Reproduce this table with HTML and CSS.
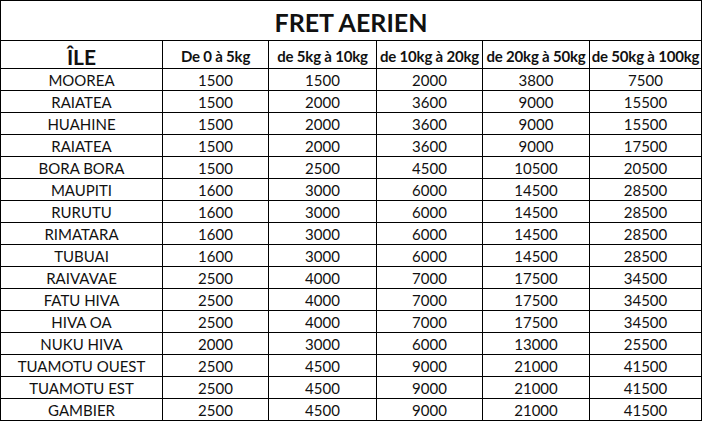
FILE: index.html
```html
<!DOCTYPE html>
<html lang="fr">
<head>
<meta charset="utf-8">
<title>Fret aérien</title>
<link rel="stylesheet" href="styles.css">
</head>
<body>
<div class="sheet">
  <div class="cell title">FRET AERIEN</div>
  <div class="cell head head-ile">ÎLE</div>
  <div class="cell head">De 0 à 5kg</div>
  <div class="cell head">de 5kg à 10kg</div>
  <div class="cell head">de 10kg à 20kg</div>
  <div class="cell head">de 20kg à 50kg</div>
  <div class="cell head">de 50kg à 100kg</div>

  <div class="cell">MOOREA</div><div class="cell">1500</div><div class="cell">1500</div><div class="cell">2000</div><div class="cell">3800</div><div class="cell">7500</div>
  <div class="cell">RAIATEA</div><div class="cell">1500</div><div class="cell">2000</div><div class="cell">3600</div><div class="cell">9000</div><div class="cell">15500</div>
  <div class="cell">HUAHINE</div><div class="cell">1500</div><div class="cell">2000</div><div class="cell">3600</div><div class="cell">9000</div><div class="cell">15500</div>
  <div class="cell">RAIATEA</div><div class="cell">1500</div><div class="cell">2000</div><div class="cell">3600</div><div class="cell">9000</div><div class="cell">17500</div>
  <div class="cell">BORA BORA</div><div class="cell">1500</div><div class="cell">2500</div><div class="cell">4500</div><div class="cell">10500</div><div class="cell">20500</div>
  <div class="cell">MAUPITI</div><div class="cell">1600</div><div class="cell">3000</div><div class="cell">6000</div><div class="cell">14500</div><div class="cell">28500</div>
  <div class="cell">RURUTU</div><div class="cell">1600</div><div class="cell">3000</div><div class="cell">6000</div><div class="cell">14500</div><div class="cell">28500</div>
  <div class="cell">RIMATARA</div><div class="cell">1600</div><div class="cell">3000</div><div class="cell">6000</div><div class="cell">14500</div><div class="cell">28500</div>
  <div class="cell">TUBUAI</div><div class="cell">1600</div><div class="cell">3000</div><div class="cell">6000</div><div class="cell">14500</div><div class="cell">28500</div>
  <div class="cell">RAIVAVAE</div><div class="cell">2500</div><div class="cell">4000</div><div class="cell">7000</div><div class="cell">17500</div><div class="cell">34500</div>
  <div class="cell">FATU HIVA</div><div class="cell">2500</div><div class="cell">4000</div><div class="cell">7000</div><div class="cell">17500</div><div class="cell">34500</div>
  <div class="cell">HIVA OA</div><div class="cell">2500</div><div class="cell">4000</div><div class="cell">7000</div><div class="cell">17500</div><div class="cell">34500</div>
  <div class="cell">NUKU HIVA</div><div class="cell">2000</div><div class="cell">3000</div><div class="cell">6000</div><div class="cell">13000</div><div class="cell">25500</div>
  <div class="cell">TUAMOTU OUEST</div><div class="cell">2500</div><div class="cell">4500</div><div class="cell">9000</div><div class="cell">21000</div><div class="cell">41500</div>
  <div class="cell">TUAMOTU EST</div><div class="cell">2500</div><div class="cell">4500</div><div class="cell">9000</div><div class="cell">21000</div><div class="cell">41500</div>
  <div class="cell">GAMBIER</div><div class="cell">2500</div><div class="cell">4500</div><div class="cell">9000</div><div class="cell">21000</div><div class="cell">41500</div>
</div>
</body>
</html>
```

FILE: styles.css
```css
html, body {
  margin: 0;
  padding: 0;
  background: #ffffff;
}

body {
  font-family: Lato, "Open Sans", "Liberation Sans", sans-serif;
  color: #111111;
}

.sheet {
  display: grid;
  grid-template-columns: 161px 105px 107px 105px 106px 111px;
  grid-template-rows: 39px 27px repeat(16, 21px);
  gap: 1px;
  padding: 1px;
  width: 702px;
  box-sizing: border-box;
  background: #000000;
}

.cell {
  background: #ffffff;
  display: flex;
  align-items: center;
  justify-content: center;
  font-size: 15px;
  white-space: nowrap;
  overflow: hidden;
}

.title {
  grid-column: 1 / -1;
  font-size: 25px;
  font-weight: 700;
  padding-top: 3px;
  box-sizing: border-box;
}

.head {
  font-weight: 700;
  font-size: 15px;
  letter-spacing: -0.2px;
  padding-top: 3px;
  box-sizing: border-box;
}

.head-ile {
  font-size: 21px;
  letter-spacing: 0;
}
```
